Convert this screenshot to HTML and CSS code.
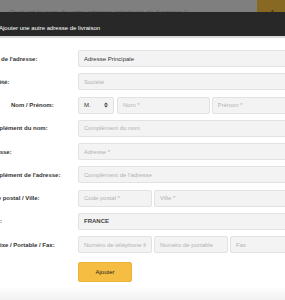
FILE: index.html
```
<!DOCTYPE html>
<html lang="fr">
  <head>
    <meta charset="UTF-8"/>
    <title>Ajouter une autre adresse de livraison</title>
    <link rel="stylesheet" href="styles.css">
  </head>
  <body>

    <div class="backdrop">
      <span class="backdrop-text">Quel est le nom de votre adresse principale de livraison ?</span>
      <span class="backdrop-btn">A</span>
    </div>

    <div class="modal">
      <div class="modal-head">Ajouter une autre adresse de livraison</div>

      <form class="form">
        <div class="row">
          <label>Nom de l'adresse:</label>
          <div class="fields"><input class="field" type="text" value="Adresse Principale"/></div>
        </div>
        <div class="row">
          <label>Société:</label>
          <div class="fields"><input class="field" type="text" placeholder="Société"/></div>
        </div>
        <div class="row">
          <label class="indent">Nom / Prénom:</label>
          <div class="fields">
            <div class="field select civ">M.
              <svg width="4" height="6" viewBox="0 0 4 6"><path d="M0 2.4 2 0.4 4 2.4Z M0 3.6 2 5.6 4 3.6Z" fill="#444"/></svg>
            </div>
            <input class="field" type="text" placeholder="Nom *"/>
            <input class="field" type="text" placeholder="Prénom *"/>
          </div>
        </div>
        <div class="row">
          <label>Complément du nom:</label>
          <div class="fields"><input class="field" type="text" placeholder="Complément du nom"/></div>
        </div>
        <div class="row">
          <label>Adresse:</label>
          <div class="fields"><input class="field" type="text" placeholder="Adresse *"/></div>
        </div>
        <div class="row">
          <label>Complément de l'adresse:</label>
          <div class="fields"><input class="field" type="text" placeholder="Complément de l'adresse"/></div>
        </div>
        <div class="row">
          <label>Code postal / Ville:</label>
          <div class="fields">
            <input class="field cp" type="text" placeholder="Code postal *"/>
            <input class="field" type="text" placeholder="Ville *"/>
          </div>
        </div>
        <div class="row">
          <label>Pays:</label>
          <div class="fields"><div class="field select country">FRANCE</div></div>
        </div>
        <div class="row">
          <label>Tél. fixe / Portable / Fax:</label>
          <div class="fields">
            <input class="field" type="text" placeholder="Numéro de téléphone fixe"/>
            <input class="field" type="text" placeholder="Numéro de portable"/>
            <input class="field" type="text" placeholder="Fax"/>
          </div>
        </div>
        <div class="row actions">
          <span></span>
          <div><button class="btn" type="button">Ajouter</button></div>
        </div>
      </form>

      <div class="modal-foot"></div>
    </div>

  </body>
</html>
```

FILE: styles.css
```
body { margin: 0; width: 285px; height: 300px; overflow: hidden; background: #fff;
  font-family: "Liberation Sans", Arial, sans-serif; color: #333 }

.backdrop { height: 12px; background: #7f7f7f; display: flex; justify-content: space-between;
  overflow: hidden; font-size: 7px; line-height: 8px; color: #5e5e5e }
.backdrop-text { padding: 9px 0 0 9px; white-space: nowrap }
.backdrop-btn { flex: 0 0 28px; background: #876924; padding-top: 9px; padding-left: 13px;
  box-sizing: border-box; color: #3a2d10 }

.modal-head { height: 26px; box-sizing: border-box; background: #282828; color: #fff;
  font-size: 6px; line-height: 8px; padding-top: 12px; text-indent: -1px; white-space: nowrap;
  border-bottom: 2px solid #d9d9d9 }

.form { margin: 12px 0 0 -14px; display: flex; flex-direction: column; gap: 6.25px }
.row { display: grid; grid-template-columns: 92px 226px; align-items: center; height: 17px }
.row label { font-size: 6px; font-weight: bold; color: #333; white-space: nowrap }
.row label.indent { padding-left: 25px }
.fields { display: flex; gap: 2px; height: 17px }

.field { box-sizing: border-box; height: 17px; flex: 1 1 0; min-width: 0; margin: 0;
  border: 1px solid #e2e2e2; border-radius: 2px; background: #f3f3f3; padding: 0 5px;
  font-family: "Liberation Sans", Arial, sans-serif; font-size: 6px; color: #333; outline: none }
.field::placeholder { color: #b2b2b2 }
.select { display: flex; align-items: center; justify-content: space-between }
.civ { flex: 0 0 36px; margin-right: 1px }
.civ svg { display: block }
.cp { flex: 0 0 74px }
.country { font-weight: bold; color: #444 }

.actions { height: 20px; margin-top: 0.75px }
.btn { width: 54px; height: 20px; border: 1px solid #eab33a; border-radius: 2px;
  background: #f5be43; color: #222; font-family: "Liberation Sans", Arial, sans-serif;
  font-size: 6px; padding: 0 }

.modal-foot { height: 20px; margin-top: 6px; background: linear-gradient(#fff, #ececec) }
```
